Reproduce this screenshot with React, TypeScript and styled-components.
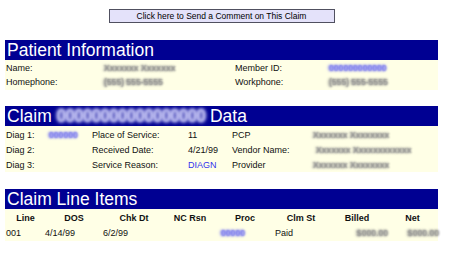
import React from "react";
import styled, { createGlobalStyle } from "styled-components";

const Global = createGlobalStyle`
  html, body { margin: 0; padding: 0; background: #ffffff; }
  body { font-family: "Liberation Sans", Arial, sans-serif; }
`;

const Page = styled.div`
  width: 433px;
  padding: 9px 0 0 5px;
  display: flex;
  flex-direction: column;
`;

const ButtonRow = styled.div`
  display: flex;
  justify-content: center;
  margin-bottom: 17px;
`;

const CommentButton = styled.button`
  width: 226px;
  height: 14px;
  padding: 0;
  margin: 0;
  box-sizing: border-box;
  background: #e4e2fa;
  border: 1px solid #505060;
  font-family: "Liberation Sans", Arial, sans-serif;
  font-size: 8.5px;
  line-height: 12px;
  color: #000;
`;

const Section = styled.section<{ $gap?: number }>`
  display: flex;
  flex-direction: column;
  margin-bottom: ${(p) => p.$gap ?? 0}px;
`;

const Header = styled.h2`
  margin: 0;
  height: 20px;
  background: #000092;
  color: #ffffff;
  font-family: "Liberation Sans", Arial, sans-serif;
  font-weight: normal;
  font-size: 17.5px;
  line-height: 20px;
  padding-left: 2px;
  white-space: nowrap;
  overflow: hidden;
`;

const Body = styled.div<{ $cols: string; $rowH: number; $pad: string }>`
  background: #ffffe6;
  display: grid;
  grid-template-columns: ${(p) => p.$cols};
  grid-auto-rows: ${(p) => p.$rowH}px;
  align-items: center;
  padding: ${(p) => p.$pad};
  font-size: 9px;
  color: #111;
  white-space: nowrap;
`;

const Cell = styled.div<{ $align?: string; $bold?: boolean; $color?: string; $indent?: number }>`
  text-align: ${(p) => p.$align ?? "left"};
  font-weight: ${(p) => (p.$bold ? "bold" : "normal")};
  color: ${(p) => p.$color ?? "#111"};
  padding-left: ${(p) => p.$indent ?? 0}px;
  overflow: visible;
`;

const Blur = styled.span<{ $color: string }>`
  display: inline-block;
  color: transparent;
  font-size: 9px;
  font-weight: bold;
  text-shadow: 0 0 3px ${(p) => p.$color}, 1px 0 2px ${(p) => p.$color};
  letter-spacing: -0.2px;
`;

const HeadBlur = styled.span`
  display: inline-block;
  color: transparent;
  font-weight: bold;
  text-shadow: 0 0 4px #e0e0ff, 0 0 3px #b8b8f4;
  letter-spacing: -1px;
`;

const GRAY = "#8c8c8c";
const BLUE = "#7070f0";

export default function App() {
  return (
    <>
      <Global />
      <Page>
        <ButtonRow>
          <CommentButton>Click here to Send a Comment on This Claim</CommentButton>
        </ButtonRow>

        <Section $gap={16}>
          <Header>Patient Information</Header>
          <Body $cols="97px 132px 93px 1fr" $rowH={14} $pad="1px 0 1px 1px">
            <Cell>Name:</Cell>
            <Cell><Blur $color={GRAY}>Xxxxxxx Xxxxxxx</Blur></Cell>
            <Cell>Member ID:</Cell>
            <Cell><Blur $color={BLUE}>000000000000</Blur></Cell>
            <Cell>Homephone:</Cell>
            <Cell><Blur $color={GRAY}>(555) 555-5555</Blur></Cell>
            <Cell>Workphone:</Cell>
            <Cell><Blur $color={GRAY}>(555) 555-5555</Blur></Cell>
          </Body>
        </Section>

        <Section $gap={17}>
          <Header>
            Claim <HeadBlur>00000000000000000</HeadBlur> Data
          </Header>
          <Body $cols="42px 44px 96px 44px 80px 1fr" $rowH={15} $pad="1px 0 0 1px">
            <Cell>Diag 1:</Cell>
            <Cell><Blur $color={BLUE}>000000</Blur></Cell>
            <Cell>Place of Service:</Cell>
            <Cell>11</Cell>
            <Cell>PCP</Cell>
            <Cell><Blur $color={GRAY}>Xxxxxxx Xxxxxxxx</Blur></Cell>

            <Cell>Diag 2:</Cell>
            <Cell />
            <Cell>Received Date:</Cell>
            <Cell>4/21/99</Cell>
            <Cell>Vendor Name:</Cell>
            <Cell $indent={3}><Blur $color={GRAY}>Xxxxxxx Xxxxxxxxxxxx</Blur></Cell>

            <Cell>Diag 3:</Cell>
            <Cell />
            <Cell>Service Reason:</Cell>
            <Cell $color="#3333ee">DIAGN</Cell>
            <Cell>Provider</Cell>
            <Cell><Blur $color={GRAY}>Xxxxxxx Xxxxxxxx</Blur></Cell>
          </Body>
        </Section>

        <Section>
          <Header>Claim Line Items</Header>
          <Body $cols="39px 58px 62px 50px 60px 52px 60px 1fr" $rowH={15} $pad="1px 0 1px 1px">
            <Cell $align="center" $bold>Line</Cell>
            <Cell $align="center" $bold>DOS</Cell>
            <Cell $align="center" $bold>Chk Dt</Cell>
            <Cell $align="center" $bold>NC Rsn</Cell>
            <Cell $align="center" $bold>Proc</Cell>
            <Cell $align="center" $bold>Clm St</Cell>
            <Cell $align="center" $bold>Billed</Cell>
            <Cell $align="center" $bold>Net</Cell>

            <Cell>001</Cell>
            <Cell>4/14/99</Cell>
            <Cell>6/2/99</Cell>
            <Cell />
            <Cell $indent={5}><Blur $color={BLUE}>00000</Blur></Cell>
            <Cell>Paid</Cell>
            <Cell $align="right"><Blur $color={GRAY}>$000.00</Blur></Cell>
            <Cell $align="right"><Blur $color={GRAY}>$000.00</Blur></Cell>
          </Body>
        </Section>
      </Page>
    </>
  );
}
